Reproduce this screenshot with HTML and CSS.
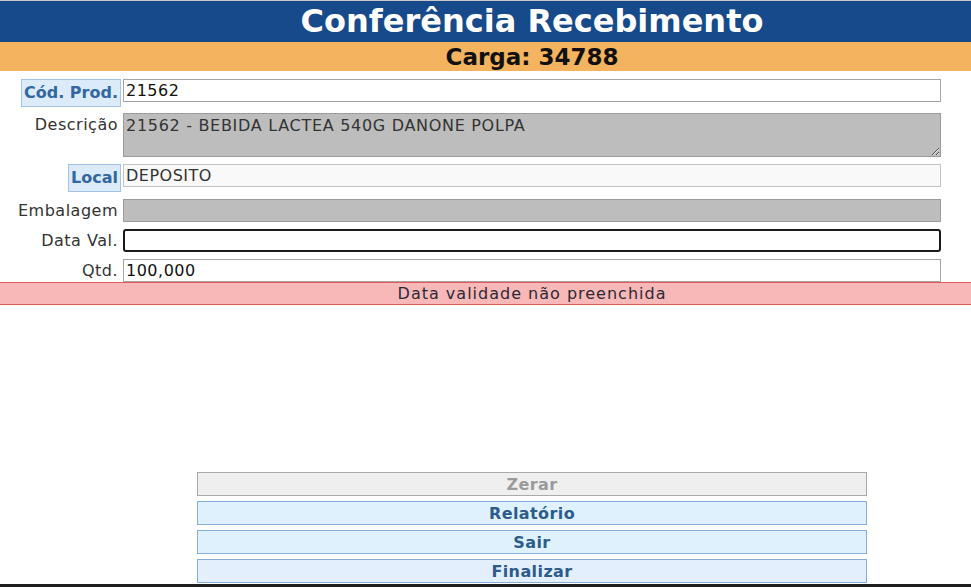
FILE: index.html
```html
<!DOCTYPE html>
<html lang="pt-BR">
<head>
    <meta charset="UTF-8">
    <meta name="viewport" content="width=device-width, initial-scale=1.0">
    <title>Conferência Recebimento</title>
    <link rel="stylesheet" href="styles.css">
</head>
<body>
    <div class="titulo">Conferência Recebimento</div>
    <div class="carga">Carga: 34788</div>

    <div class="form">
        <div class="rotulo"><span class="rotulo-link">Cód. Prod.</span></div>
        <div class="campo"><input type="text" class="entrada" value="21562"></div>

        <div class="rotulo">Descrição</div>
        <div class="campo"><textarea class="entrada area desabilitado" readonly>21562 - BEBIDA LACTEA 540G DANONE POLPA</textarea></div>

        <div class="rotulo"><span class="rotulo-link">Local</span></div>
        <div class="campo"><input type="text" class="entrada clara" value="DEPOSITO" readonly></div>

        <div class="rotulo">Embalagem</div>
        <div class="campo"><input type="text" class="entrada desabilitado" readonly></div>

        <div class="rotulo">Data Val.</div>
        <div class="campo"><input type="text" class="entrada foco"></div>

        <div class="rotulo">Qtd.</div>
        <div class="campo"><input type="text" class="entrada" value="100,000"></div>
    </div>

    <div class="erro">Data validade não preenchida</div>

    <div class="botoes">
        <button class="botao inativo">Zerar</button>
        <button class="botao">Relatório</button>
        <button class="botao">Sair</button>
        <button class="botao ultimo">Finalizar</button>
    </div>
    <div class="rodape"></div>
</body>
</html>
```

FILE: styles.css
```css
html {
    height: 100%;
}
body {
    height: 100%;
    font-family: "DejaVu Sans", sans-serif;
    font-size: 16px;
    letter-spacing: 0.5px;
    color: #222;
    margin: 0;
    display: flex;
    flex-direction: column;
    border-top: 1px solid #c8c8c8;
    box-sizing: border-box;
}
/* o centro do conteúdo fica deslocado para a direita */
.titulo, .carga, .erro {
    padding-left: 93px;
    text-align: center;
}
.titulo {
    height: 41px;
    background-color: #174a8a;
    color: #fff;
    font-size: 32px;
    font-weight: bold;
    letter-spacing: 0;
    line-height: 40px;
}
.carga {
    height: 29px;
    background-color: #f4b35f;
    color: #111;
    font-size: 23px;
    font-weight: bold;
    letter-spacing: 0;
    line-height: 30px;
}
.form {
    display: grid;
    grid-template-columns: 121px 1fr;
    grid-template-rows: 34px 51px 35px 30px 30px 23px;
    column-gap: 2px;
    margin: 8px 30px 0 0;
}
.rotulo {
    text-align: right;
    padding: 2px 3px 0 0;
    color: #333;
    white-space: nowrap;
}
.rotulo-link {
    display: inline-block;
    margin: -2px -3px 0 0;
    padding: 3px 2px 4px 2px;
    background-color: #dcebfa;
    border: 1px solid #a3c4e6;
    color: #32679f;
    font-weight: bold;
    letter-spacing: 0;
}
.entrada {
    display: block;
    width: 100%;
    height: 23px;
    box-sizing: border-box;
    margin: 0;
    padding: 0 2px;
    border: 1px solid #a6a6a6;
    background-color: #fff;
    font-family: inherit;
    font-size: 16px;
    letter-spacing: 0.5px;
    color: #111;
    outline: none;
}
.area {
    height: 44px;
    padding-top: 2px;
    resize: vertical;
    letter-spacing: 0.7px;
}
.desabilitado {
    background-color: #bdbdbd;
    border-color: #9c9c9c;
    color: #333;
}
.clara {
    background-color: #f9f9f9;
    border-color: #c4c4c4;
    color: #333;
}
.foco {
    border: 2px solid #1a1a1a;
    border-radius: 3px;
}
.erro {
    height: 21px;
    background-color: #f9b8b8;
    border-top: 1px solid #e05a5a;
    border-bottom: 1px solid #e05a5a;
    line-height: 21px;
    font-size: 16px;
    letter-spacing: 1px;
    color: #2a2a36;
}
.botoes {
    flex: 1;
    display: flex;
    flex-direction: column;
    justify-content: flex-end;
    gap: 5px;
    padding: 0 104px 1px 197px;
}
.botao {
    height: 24px;
    margin: 0;
    padding: 0;
    border: 1px solid #86aedb;
    background-color: #dff1fd;
    color: #2d5b8c;
    font-family: inherit;
    font-size: 16px;
    font-weight: bold;
    letter-spacing: 0.4px;
    cursor: pointer;
}
.botao.inativo {
    background-color: #efefef;
    border-color: #aaaaaa;
    color: #9a9a9a;
}
.botao.ultimo {
    background-color: #e3effd;
}
.rodape {
    height: 3px;
    background-color: #1e1e1e;
}
```
